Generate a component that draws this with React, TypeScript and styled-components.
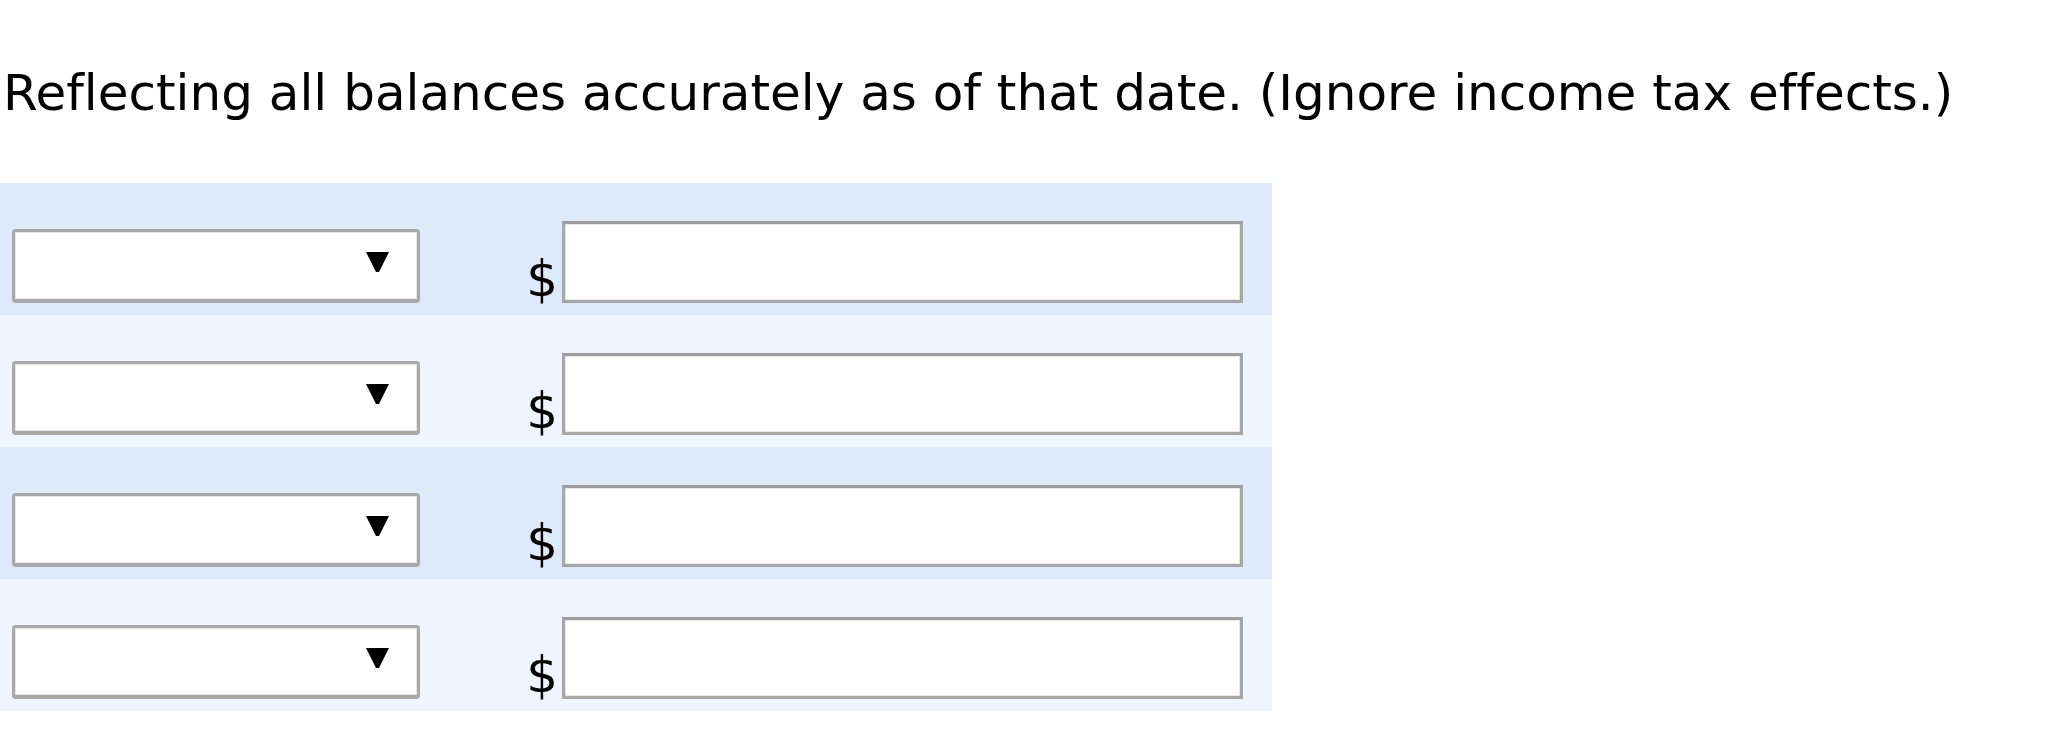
import React from 'react'
import styled, { createGlobalStyle } from 'styled-components'

const GlobalStyle = createGlobalStyle`
  html, body {
    margin: 0;
    padding: 0;
    background: #ffffff;
  }
  body {
    font-family: "DejaVu Sans", Verdana, sans-serif;
    font-variant-ligatures: none;
    color: #000000;
  }
`

const rows = [0, 1, 2, 3]

export default function App() {
  return (
    <Page>
      <GlobalStyle />
      <Instruction>Reflecting all balances accurately as of that date. (Ignore income tax effects.)</Instruction>
      <EntryTable>
        {rows.map((i) => (
          <EntryRow key={i} $shaded={i % 2 === 0}>
            <SelectWrap>
              <AccountSelect defaultValue="">
                <option value=""></option>
              </AccountSelect>
              <Arrow viewBox="0 0 23 20" aria-hidden="true">
                <polygon points="0,0 23,0 13,20 10,20" fill="#000" />
              </Arrow>
            </SelectWrap>
            <Dollar>$</Dollar>
            <AmountInput type="text" />
          </EntryRow>
        ))}
      </EntryTable>
    </Page>
  )
}

const Page = styled.div`
  width: 2046px;
  min-height: 733px;
`

const Instruction = styled.p`
  margin: 0;
  padding: 63px 0 0 3px;
  font-size: 50px;
  line-height: 60px;
  white-space: nowrap;
`

const EntryTable = styled.div`
  margin-top: 60px;
  width: 1272px;
  display: flex;
  flex-direction: column;
`

const EntryRow = styled.div<{ $shaded: boolean }>`
  height: 132px;
  box-sizing: border-box;
  padding: 0 29px 12px 12px;
  display: grid;
  grid-template-columns: 408px 1fr 681px;
  align-items: end;
  background: ${(p) => (p.$shaded ? '#dee9f9' : '#eef5ff')};
`

const SelectWrap = styled.div`
  position: relative;
  height: 74px;
`

const AccountSelect = styled.select`
  appearance: none;
  -webkit-appearance: none;
  width: 100%;
  height: 100%;
  box-sizing: border-box;
  background: #ffffff;
  border: 3px solid #a8a8a8;
  border-bottom-width: 4px;
  border-radius: 4px;
  box-shadow: inset 0 0 0 1px #e6e6e6;
  outline: none;
`

const Arrow = styled.svg`
  position: absolute;
  right: 31px;
  top: 23px;
  width: 23px;
  height: 20px;
  pointer-events: none;
`

const Dollar = styled.span`
  justify-self: end;
  margin-right: 4px;
  margin-bottom: -1px;
  font-size: 50px;
  line-height: 1;
`

const AmountInput = styled.input`
  width: 100%;
  height: 82px;
  box-sizing: border-box;
  background: #ffffff;
  border: 3px solid #a6a6a6;
  border-top-color: #9c9c9c;
  box-shadow: inset 0 0 0 1px #e8e8e8;
  border-radius: 0;
  outline: none;
  margin: 0;
`
